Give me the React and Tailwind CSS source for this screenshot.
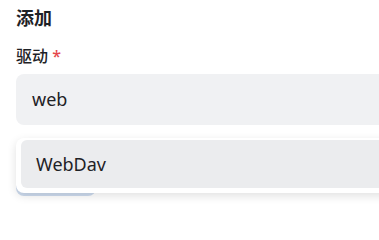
export default function App() {
  return (
    <div
      className="w-[379px] h-[214px] overflow-hidden bg-white pl-4 pt-[5px] text-[#1e2226]"
      style={{ fontFamily: '"Noto Sans", "Noto Sans CJK SC", sans-serif' }}
    >
      <h2 className="text-[18px] leading-[26px] font-bold">添加</h2>
      <div className="mt-[13px] text-[16px] leading-[24px] font-medium">
        驱动 <span className="text-[#e5484d]">*</span>
      </div>
      <div className="relative mt-[6px]">
        <div className="h-[51px] w-[400px] rounded-[8px] bg-[#f0f1f3] flex items-center pl-4 text-[18px]">
          web
        </div>
        <div className="mt-[24px] h-[47px] w-[80px] rounded-[8px] bg-[#cddbee]" />
        <div className="absolute left-0 top-[64px] w-[400px] rounded-[8px] bg-white px-[5px] pt-[2px] pb-[5px] shadow-[0_3px_10px_rgba(0,0,0,0.12)]">
          <div className="h-[48px] rounded-[6px] bg-[#ebecee] flex items-center pl-[15px] text-[18px]">
            WebDav
          </div>
        </div>
      </div>
    </div>
  )
}
